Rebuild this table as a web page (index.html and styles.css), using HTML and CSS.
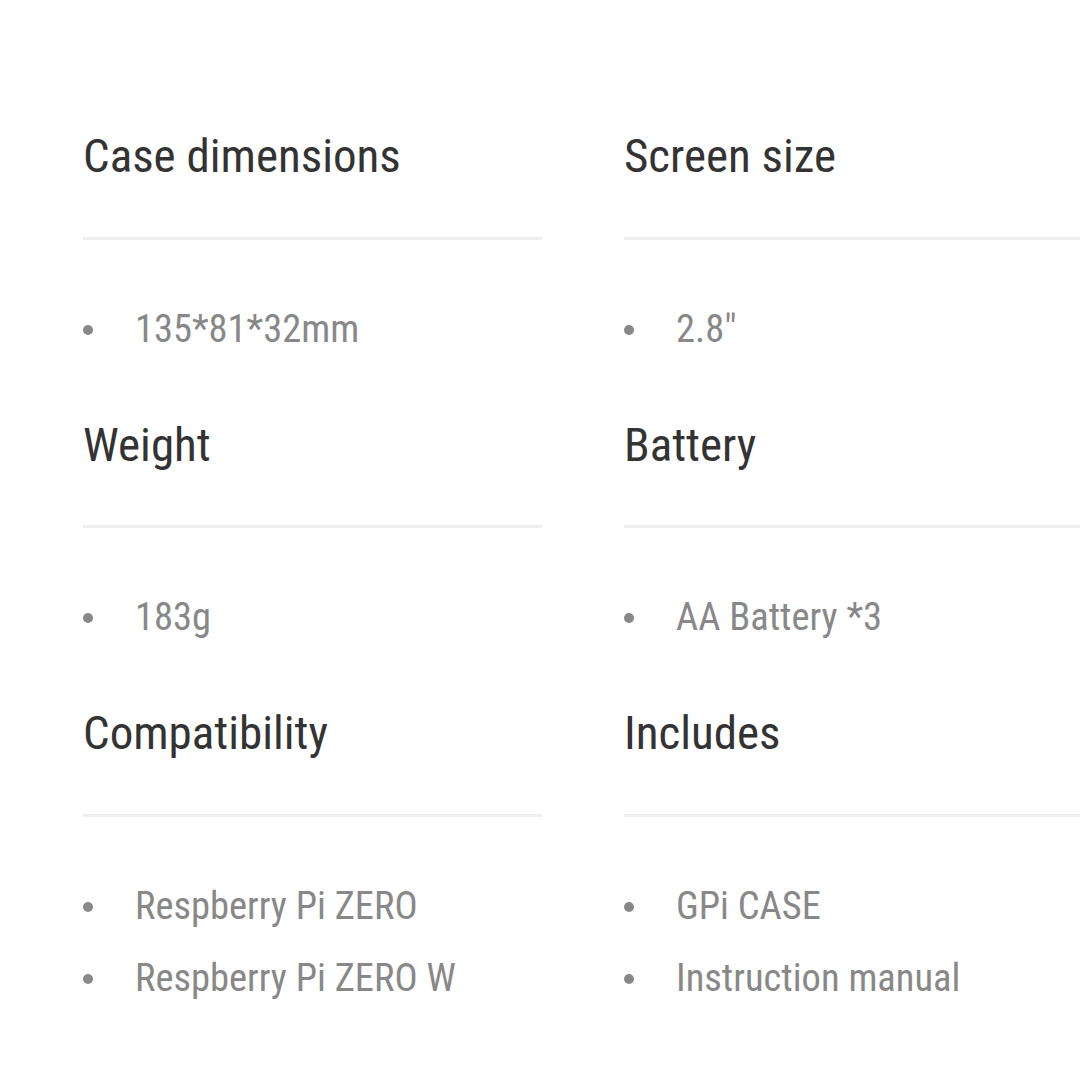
FILE: index.html
```html
<!DOCTYPE html>
<html>
<head>
<meta charset="utf-8">
<link rel="stylesheet" href="styles.css">
</head>
<body>
<div class="specs">
  <section class="spec">
    <h3 class="spec-title">Case dimensions</h3>
    <ul class="spec-list"><li>135*81*32mm</li></ul>
  </section>
  <section class="spec">
    <h3 class="spec-title">Screen size</h3>
    <ul class="spec-list"><li>2.8"</li></ul>
  </section>
  <section class="spec">
    <h3 class="spec-title">Weight</h3>
    <ul class="spec-list"><li>183g</li></ul>
  </section>
  <section class="spec">
    <h3 class="spec-title">Battery</h3>
    <ul class="spec-list"><li>AA Battery *3</li></ul>
  </section>
  <section class="spec">
    <h3 class="spec-title">Compatibility</h3>
    <ul class="spec-list"><li>Respberry Pi ZERO</li><li>Respberry Pi ZERO W</li></ul>
  </section>
  <section class="spec">
    <h3 class="spec-title">Includes</h3>
    <ul class="spec-list"><li>GPi CASE</li><li>Instruction manual</li></ul>
  </section>
</div>
</body>
</html>
```
FILE: styles.css
```css
html, body {
  margin: 0;
  padding: 0;
  background: #fff;
}
body {
  font-family: "Roboto Condensed", Roboto, "Liberation Sans", sans-serif;
  font-stretch: condensed;
  overflow: hidden;
}
.specs {
  display: grid;
  grid-template-columns: 459px 459px;
  column-gap: 82px;
  padding: 127px 0 0 83px;
}
.spec-title {
  margin: 0;
  font-size: 47px;
  font-weight: 400;
  line-height: 57.6px;
  color: #333;
  padding-bottom: 52px;
  border-bottom: 3px solid #eee;
}
.spec-list {
  list-style: none;
  margin: 0;
  padding: 53px 0 51px 0;
}
.spec-list li {
  display: flex;
  align-items: center;
  font-size: 38.5px;
  line-height: 72px;
  color: #888;
}
.spec-list li::before {
  content: "";
  width: 10px;
  height: 10px;
  border-radius: 50%;
  background: #888;
  margin: 2px 42px 0 0;
  flex: none;
}
```
